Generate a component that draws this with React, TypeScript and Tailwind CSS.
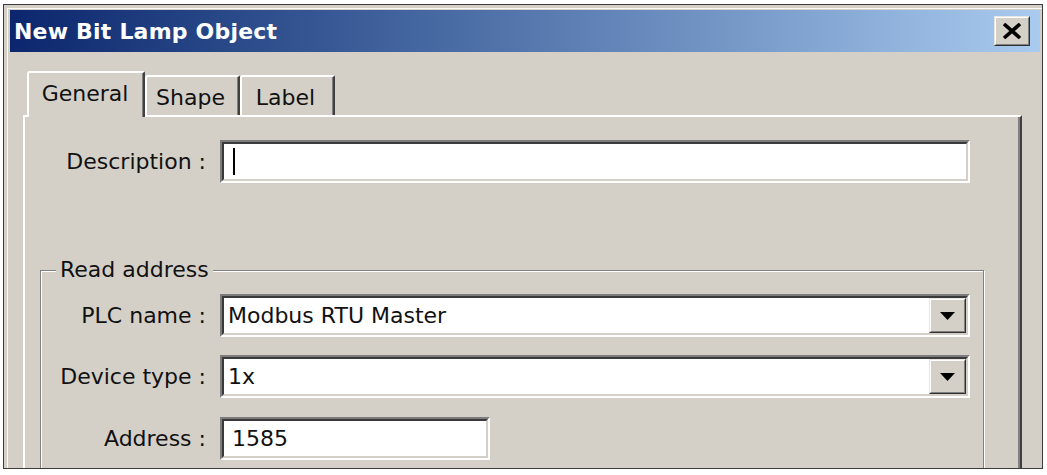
import React from "react";

const Sunken = ({
  className,
  children,
}: {
  className?: string;
  children?: React.ReactNode;
}) => (
  <div
    className={`border-2 border-t-[#7c7c7c] border-l-[#7c7c7c] border-r-white border-b-white ${className ?? ""}`}
  >
    <div className="h-full border-2 border-t-[#3a3a3a] border-l-[#3a3a3a] border-r-[#d4d0c8] border-b-[#d4d0c8] bg-white flex items-center">
      {children}
    </div>
  </div>
);

const Raised = ({
  className,
  children,
}: {
  className?: string;
  children?: React.ReactNode;
}) => (
  <div
    className={`border border-t-[#e8e6e0] border-l-[#e8e6e0] border-r-[#303030] border-b-[#303030] ${className ?? ""}`}
  >
    <div className="h-full border border-t-white border-l-white border-r-[#808080] border-b-[#808080] bg-[#d4d0c8] flex items-center justify-center">
      {children}
    </div>
  </div>
);

const ArrowDown = () => (
  <svg width="15" height="8" viewBox="0 0 15 8">
    <polygon points="0,0 15,0 7.5,8" fill="#000" />
  </svg>
);

const Combo = ({ value }: { value: string }) => (
  <Sunken className="w-[750px] h-[43px]">
    <span className="flex-1 pl-[4px] leading-none">{value}</span>
    <Raised className="w-[37px] h-full">
      <ArrowDown />
    </Raised>
  </Sunken>
);

const Row = ({
  label,
  labelWidth,
  children,
}: {
  label: string;
  labelWidth: string;
  children: React.ReactNode;
}) => (
  <div className="flex items-center">
    <span className={`${labelWidth} text-right whitespace-nowrap`}>{label}</span>
    <div className="ml-[14px]">{children}</div>
  </div>
);

const tabs = ["General", "Shape", "Label"];

const App = () => {
  const [activeTab, setActiveTab] = React.useState(0);

  return (
    <div
      className="w-[1047px] h-[475px] bg-white pt-[4px] pl-[3px] overflow-hidden text-[22px] text-[#111]"
      style={{ fontFamily: '"DejaVu Sans", Verdana, sans-serif' }}
    >
      <div className="w-[1040px] h-[465px] border border-[#3c3c3c] bg-[#d4d0c8] overflow-hidden flex flex-col shadow-[inset_3px_3px_0_#d4d0c8,inset_4px_4px_0_#fbfaf6]">
        {/* title bar */}
        <div className="mt-[5px] ml-[6px] mr-[2px] h-[42px] shrink-0 flex items-center bg-gradient-to-r from-[#0c266d] via-[#5577ad] to-[#a9cbef]">
          <span className="pl-[4px] font-bold text-white flex-1 tracking-[0.2px]">
            New Bit Lamp Object
          </span>
          <Raised className="w-[36px] h-[30px] mr-[10px]">
            <svg width="20" height="16" viewBox="0 0 20 16">
              <path d="M2 1 L18 15 M18 1 L2 15" stroke="#000" strokeWidth="3.6" />
            </svg>
          </Raised>
        </div>

        {/* tabs */}
        <div className="mt-[19px] ml-[23px] flex items-end shrink-0">
          {tabs.map((t, i) => {
            const active = i === activeTab;
            return (
              <button
                key={t}
                onClick={() => setActiveTab(i)}
                className={
                  active
                    ? "relative z-10 -mb-[2px] w-[118px] h-[46px] pb-[4px] pr-[2px] bg-[#d4d0c8] border-t-2 border-l-2 border-r-2 border-t-white border-l-white border-r-[#404040] rounded-tl-[3px] rounded-tr-[2px] flex items-center justify-center shadow-[inset_-1px_0_0_#808080]"
                    : "w-[95px] h-[40px] pt-[3px] pr-[4px] bg-[#d4d0c8] border-t-2 border-l-2 border-r-2 border-t-white border-l-white border-r-[#404040] rounded-tl-[3px] rounded-tr-[2px] flex items-center justify-center shadow-[inset_-1px_0_0_#808080]"
                }
              >
                {t}
              </button>
            );
          })}
        </div>

        {/* panel */}
        <div className="ml-[19px] w-[999px] h-[400px] shrink-0 border-t-2 border-l-2 border-r-2 border-t-white border-l-white border-r-[#404040] shadow-[inset_-2px_0_0_#808080] pt-[23px]">
          <Row label="Description :" labelWidth="w-[181px]">
            <Sunken className="w-[750px] h-[43px]">
              <span className="ml-[9px] w-[2px] h-[27px] bg-black" />
            </Sunken>
          </Row>

          {/* group box */}
          <div className="relative mt-[87px] ml-[15px] w-[944px] h-[300px] border border-[#808080] shadow-[inset_1px_1px_0_#fff,1px_1px_0_#fff] pt-[23px]">
            <span className="absolute -top-[14px] left-[15px] px-[4px] bg-[#d4d0c8] leading-[26px]">
              Read address
            </span>
            <div className="flex flex-col gap-[18px]">
              <Row label="PLC name :" labelWidth="w-[165px]">
                <Combo value="Modbus RTU Master" />
              </Row>
              <Row label="Device type :" labelWidth="w-[165px]">
                <Combo value="1x" />
              </Row>
              <div className="mt-[1px]">
                <Row label="Address :" labelWidth="w-[165px]">
                  <Sunken className="w-[270px] h-[43px]">
                    <span className="pl-[8px] leading-none">1585</span>
                  </Sunken>
                </Row>
              </div>
            </div>
          </div>
        </div>
      </div>
    </div>
  );
};

export default App;
